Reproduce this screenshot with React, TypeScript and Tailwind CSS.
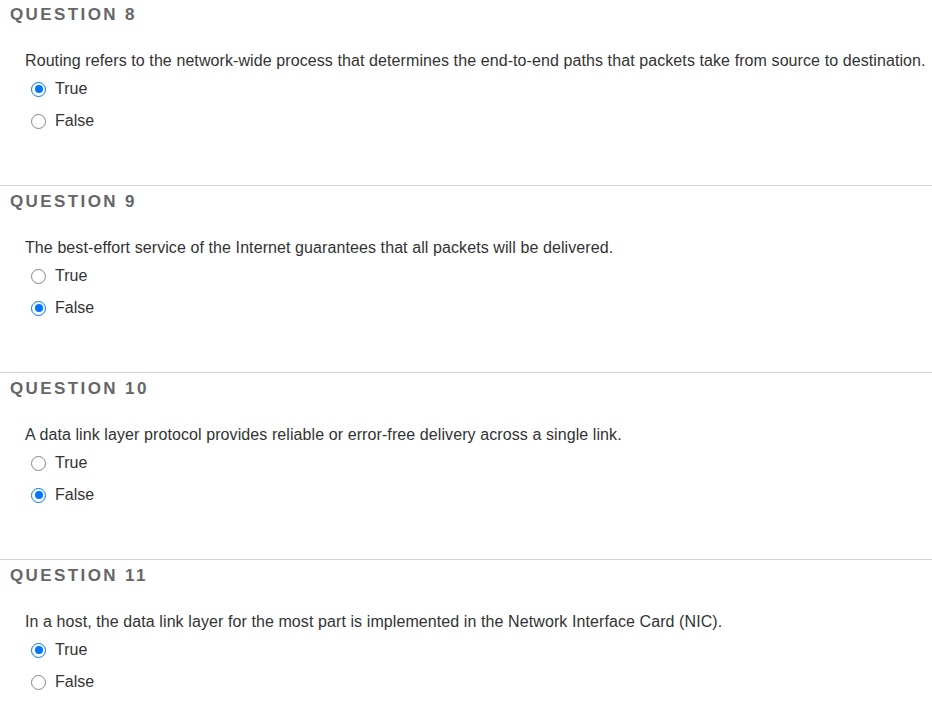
type Question = {
  num: number;
  text: string;
  answer: "True" | "False";
};

const questions: Question[] = [
  {
    num: 8,
    text: "Routing refers to the network-wide process that determines the end-to-end paths that packets take from source to destination.",
    answer: "True",
  },
  {
    num: 9,
    text: "The best-effort service of the Internet guarantees that all packets will be delivered.",
    answer: "False",
  },
  {
    num: 10,
    text: "A data link layer protocol provides reliable or error-free delivery across a single link.",
    answer: "False",
  },
  {
    num: 11,
    text: "In a host, the data link layer for the most part is implemented in the Network Interface Card (NIC).",
    answer: "True",
  },
];

function Radio({ checked }: { checked: boolean }) {
  if (checked) {
    return (
      <span className="flex h-[15px] w-[15px] items-center justify-center rounded-full border-[1.5px] border-[#0075ff] bg-white">
        <span className="h-[8px] w-[8px] rounded-full bg-[#0075ff]" />
      </span>
    );
  }
  return <span className="h-[15px] w-[15px] rounded-full border border-[#858585] bg-white" />;
}

function QuestionBlock({ q, first }: { q: Question; first: boolean }) {
  return (
    <div className={first ? "pt-[5px] pb-[48px]" : "border-t border-[#d4d4d4] pt-[6px] pb-[48px]"}>
      <div className="pl-[10px] text-[17px] font-bold leading-5 tracking-[2.4px] text-[#666]">
        QUESTION {q.num}
      </div>
      <div className="mt-[26px] pl-[25px] text-[16px] leading-5 tracking-[0.09px] text-[#333] whitespace-nowrap">
        {q.text}
      </div>
      <div className="mt-[2px]">
        {(["True", "False"] as const).map((opt) => (
          <div key={opt} className="flex h-8 items-center pl-[31px]">
            <Radio checked={q.answer === opt} />
            <span className="ml-[9px] text-[16px] text-[#333]">{opt}</span>
          </div>
        ))}
      </div>
    </div>
  );
}

export default function App() {
  return (
    <div className="h-[703px] w-[932px] overflow-hidden bg-white font-['Liberation_Sans',Arial,sans-serif]">
      {questions.map((q, i) => (
        <QuestionBlock key={q.num} q={q} first={i === 0} />
      ))}
    </div>
  );
}
